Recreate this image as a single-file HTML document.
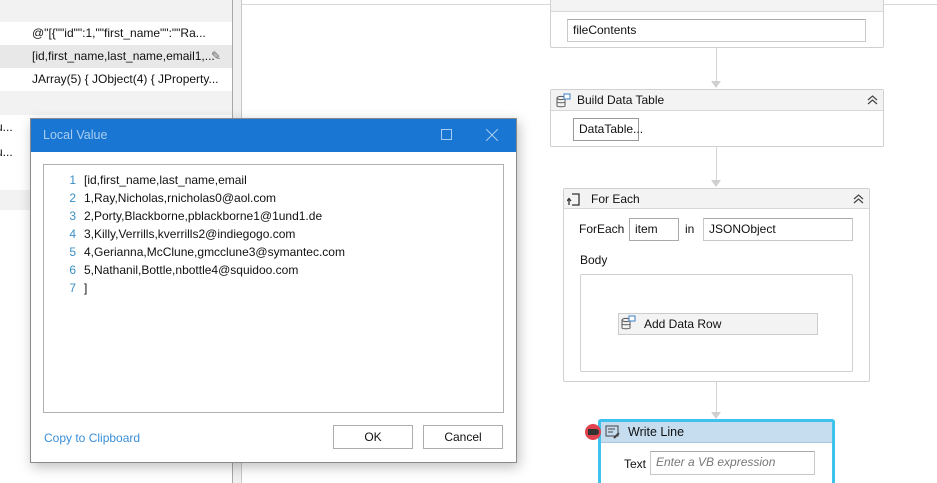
<!DOCTYPE html>
<html style="overflow:hidden;width:937px;height:483px"><head><meta charset="utf-8"><style>
*{margin:0;padding:0;box-sizing:border-box}
body{width:937px;height:483px;overflow:hidden;background:#fff;font-family:"Liberation Sans",sans-serif;font-size:12px;color:#111;position:relative}
.a{position:absolute}
.row{position:absolute;left:0;width:232px;height:23px;line-height:23px;padding-left:32px;white-space:nowrap;overflow:hidden}
.box{position:absolute;border:1px solid #d0d0d0;background:#fff;border-radius:2px}
.hdr{position:absolute;left:0;right:0;top:0;background:#f3f3f3;border-bottom:1px solid #d8d8d8;height:21px;line-height:20px;padding-left:26px}
.inp{position:absolute;border:1px solid #c8c8c8;border-top-color:#aaa;background:#fff;height:23px;line-height:21px;padding-left:5px;white-space:nowrap}
.vl{position:absolute;left:716px;width:1px;background:#d4d4d4}
.arr{position:absolute;left:711px;width:0;height:0;border-left:5px solid transparent;border-right:5px solid transparent;border-top:7px solid #d0d0d0}
.chev{position:absolute;right:5px;top:5px}
.ln{height:18px;line-height:18px;white-space:nowrap}
.ln b{display:inline-block;width:40px;text-align:right;padding-right:8px;font-weight:normal;color:#3b8fc6}
</style></head><body>
<div class="a" style="left:0;top:0;width:232px;height:483px;background:#fff"></div>
<div class="a" style="left:0;top:0;width:232px;height:22px;background:#f2f2f2"></div>
<div class="row" style="top:22px">@"[{""id"":1,""first_name"":""Ra...</div>
<div class="row" style="top:45px;background:#e8e8e8">[id,first_name,last_name,email1,...<span style="position:absolute;left:211px;top:0;color:#666">✎</span></div>
<div class="row" style="top:68px">JArray(5) { JObject(4) { JProperty...</div>
<div class="a" style="left:0;top:91px;width:232px;height:24px;background:#f2f2f2"></div>
<div class="row" style="top:116px;padding-left:0;left:-4px">u...</div>
<div class="row" style="top:141px;padding-left:0;left:-4px">u...</div>
<div class="a" style="left:0;top:190px;width:232px;height:20px;background:#f2f2f2"></div>
<div class="a" style="left:232px;top:0;width:10px;height:483px;background:#f0f0f0;border-left:1px solid #a8a8a8;border-right:1px solid #c8c8c8"></div>
<div class="a" style="left:242px;top:4px;width:695px;height:1px;background:#d8d8d8"></div>

<div class="box" style="left:550px;top:-2px;width:334px;height:50px"><div class="hdr" style="height:13px"></div>
<div class="inp" style="left:16px;top:20px;width:299px">fileContents</div></div>
<div class="vl" style="top:48px;height:34px"></div><div class="arr" style="top:81px"></div>

<div class="box" style="left:550px;top:89px;width:334px;height:58px"><div class="hdr">Build Data Table<svg class="chev" width="11" height="10" viewBox="0 0 11 10" fill="none" stroke="#444" stroke-width="1.2"><path d="M1 5l4.5-4 4.5 4M1 9l4.5-4 4.5 4"/></svg></div>
<svg class="a" style="left:4px;top:3px" width="16" height="16" viewBox="0 0 16 16" fill="none" stroke="#555"><ellipse cx="6" cy="5" rx="4" ry="1.6"/><path d="M2 5v8c0 1 8 1 8 0V5M2 9c0 1 8 1 8 0"/><rect x="9" y="1" width="6" height="5" fill="#fff" stroke="#3b7fc4"/></svg>
<div class="inp" style="left:22px;top:28px;width:66px;border-color:#999">DataTable...</div></div>
<div class="vl" style="top:147px;height:34px"></div><div class="arr" style="top:180px"></div>

<div class="box" style="left:563px;top:188px;width:307px;height:194px"><div class="hdr" style="height:20px;padding-left:27px">For Each<svg class="chev" width="11" height="10" viewBox="0 0 11 10" fill="none" stroke="#444" stroke-width="1.2"><path d="M1 5l4.5-4 4.5 4M1 9l4.5-4 4.5 4"/></svg></div>
<svg class="a" style="left:3px;top:3px" width="14" height="14" viewBox="0 0 14 14" fill="none" stroke="#333" stroke-width="1.3"><path d="M5 2h7v11H5M2 13V7M0 9l2-2.5L4 9"/></svg>
<div class="a" style="left:15px;top:33px">ForEach</div>
<div class="inp" style="left:65px;top:29px;width:50px;border-color:#aaa">item</div>
<div class="a" style="left:121px;top:33px">in</div>
<div class="inp" style="left:139px;top:29px;width:150px">JSONObject</div>
<div class="a" style="left:16px;top:64px">Body</div>
<div class="box" style="left:16px;top:85px;width:273px;height:98px">
<div class="a" style="left:37px;top:38px;width:200px;height:22px;border:1px solid #ccc;background:#f3f3f3;line-height:20px;padding-left:25px">Add Data Row</div>
<svg class="a" style="left:39px;top:40px" width="16" height="16" viewBox="0 0 16 16" fill="none" stroke="#555"><ellipse cx="6" cy="5" rx="4" ry="1.6"/><path d="M2 5v8c0 1 8 1 8 0V5M2 9c0 1 8 1 8 0"/><rect x="9" y="1" width="6" height="5" fill="#fff" stroke="#3b7fc4"/></svg>
</div></div>
<div class="vl" style="top:382px;height:32px"></div><div class="arr" style="top:412px"></div>

<div class="a" style="left:598px;top:419px;width:237px;height:64px;border:3px solid #3fc3ee;border-bottom:none;border-radius:3px 3px 0 0;background:#fff"></div>
<div class="a" style="left:601px;top:422px;width:231px;height:21px;background:#c6ddf0;border-bottom:1px solid #a9c6e0;line-height:20px;padding-left:27px;font-size:12.5px">Write Line</div>
<svg class="a" style="left:605px;top:425px" width="16" height="15" viewBox="0 0 16 15" fill="none" stroke="#444"><rect x="1" y="1" width="12" height="10"/><path d="M3 4h7M3 7h5"/><path d="M9 13l5-5" stroke-width="2"/></svg>
<div class="a" style="left:585px;top:424px;width:16px;height:16px;border-radius:50%;background:#e0434f"></div>
<div class="a" style="left:588px;top:429px;width:11px;height:6px;background:#333;border-radius:0 3px 3px 0"></div>
<div class="a" style="left:624px;top:457px">Text</div>
<div class="inp" style="left:650px;top:451px;width:165px;height:24px;color:#777;font-style:italic">Enter a VB expression</div>

<div class="a" style="left:30px;top:118px;width:487px;height:345px;background:#fff;border:1px solid #8a8a8a;box-shadow:2px 4px 12px rgba(0,0,0,.25)">
<div class="a" style="left:0;top:0;width:485px;height:33px;background:#1976d2;color:#a9cdf0;line-height:33px;padding-left:12px;font-size:12.5px">Local Value</div>
<div class="a" style="left:410px;top:10px;width:11px;height:11px;border:1px solid #a9cdf0"></div>
<svg class="a" style="left:455px;top:10px" width="12" height="12"><path d="M0 0L12 12M12 0L0 12" stroke="#a9cdf0"/></svg>
<div class="a" style="left:12px;top:45px;width:461px;height:249px;border:1px solid #b0b0b0;padding-top:6px">
<div class="ln"><b>1</b>[id,first_name,last_name,email</div>
<div class="ln"><b>2</b>1,Ray,Nicholas,rnicholas0@aol.com</div>
<div class="ln"><b>3</b>2,Porty,Blackborne,pblackborne1@1und1.de</div>
<div class="ln"><b>4</b>3,Killy,Verrills,kverrills2@indiegogo.com</div>
<div class="ln"><b>5</b>4,Gerianna,McClune,gmcclune3@symantec.com</div>
<div class="ln"><b>6</b>5,Nathanil,Bottle,nbottle4@squidoo.com</div>
<div class="ln"><b>7</b>]</div>
</div>
<div class="a" style="left:13px;top:312px;color:#3b8fd6">Copy to Clipboard</div>
<div class="a" style="left:302px;top:306px;width:80px;height:24px;border:1px solid #adadad;text-align:center;line-height:22px">OK</div>
<div class="a" style="left:392px;top:306px;width:80px;height:24px;border:1px solid #adadad;text-align:center;line-height:22px">Cancel</div>
</div>
</body></html>
